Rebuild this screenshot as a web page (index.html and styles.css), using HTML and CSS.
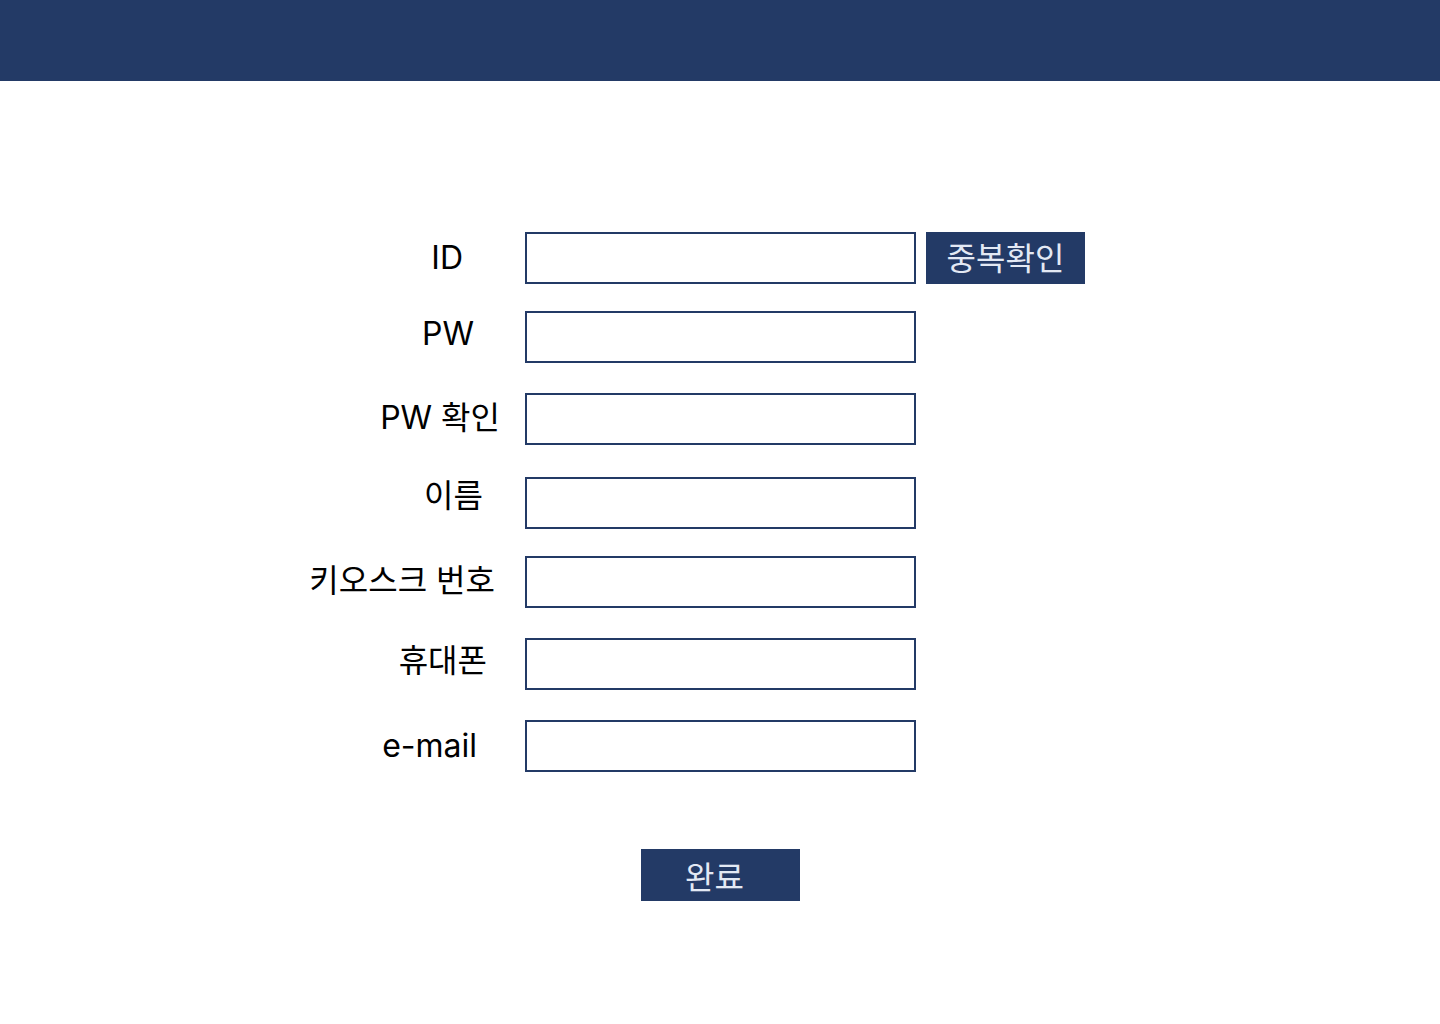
FILE: index.html
```html
<!DOCTYPE html>
<html lang="ko">
<head>
<meta charset="utf-8">
<title>회원가입</title>
<link rel="stylesheet" href="styles.css">
</head>
<body>
<header class="topbar"></header>
<main class="signup">
  <form class="form">
    <div class="row">
      <label class="label label-id">ID</label>
      <input class="field" type="text">
      <button type="button" class="btn btn-check">중복확인</button>
    </div>
    <div class="row row-gap27">
      <label class="label label-pw">PW</label>
      <input class="field" type="password">
    </div>
    <div class="row row-gap30">
      <label class="label label-pwc">PW 확인</label>
      <input class="field" type="password">
    </div>
    <div class="row row-gap32">
      <label class="label label-name">이름</label>
      <input class="field" type="text">
    </div>
    <div class="row row-gap27">
      <label class="label label-kiosk">키오스크 번호</label>
      <input class="field" type="text">
    </div>
    <div class="row row-gap30">
      <label class="label label-phone">휴대폰</label>
      <input class="field" type="text">
    </div>
    <div class="row row-gap30">
      <label class="label label-mail">e-mail</label>
      <input class="field" type="text">
    </div>
    <div class="submit-row">
      <button type="submit" class="btn btn-done">완료</button>
    </div>
  </form>
</main>
</body>
</html>
```
FILE: styles.css
```css
* { box-sizing: border-box; }
html, body { margin: 0; padding: 0; background: #ffffff; }
body {
  font-family: Inter, "Noto Sans CJK KR", sans-serif;
  color: #000000;
  width: 1440px;
  height: 1024px;
  overflow: hidden;
}
.topbar {
  height: 81px;
  background: #233a66;
}
.signup {
  padding-top: 151px;
}
.form {
  display: flex;
  flex-direction: column;
  margin: 0;
}
.row {
  display: flex;
  align-items: center;
  height: 52px;
  margin-top: 27px;
}
.row:first-child { margin-top: 0; }
.row-gap27 { margin-top: 27px; }
.row-gap30 { margin-top: 30px; }
.row-gap32 { margin-top: 32px; }
.label {
  width: 525px;
  text-align: right;
  font-size: 32px;
  line-height: 38px;
  flex: none;
}
.label-id { padding-right: 62px; }
.label-pw { padding-right: 51px; margin-bottom: 6px; }
.label-pwc { padding-right: 25px; margin-bottom: 2px; }
.label-name { padding-right: 42px; margin-bottom: 14px; }
.label-kiosk { padding-right: 30px; margin-bottom: 2px; }
.label-phone { padding-right: 38px; margin-bottom: 6px; }
.label-mail { padding-right: 48px; }
.field {
  width: 391px;
  height: 52px;
  border: 2px solid #233a66;
  background: #ffffff;
  margin: 0;
  padding: 0 10px;
  font: inherit;
  outline: none;
  flex: none;
}
.btn {
  background: #233a66;
  color: #e3e9f4;
  border: none;
  margin: 0;
  font-family: Inter, "Noto Sans CJK KR", sans-serif;
  font-size: 32px;
  line-height: 38px;
  height: 52px;
  width: 159px;
  padding: 0;
  cursor: pointer;
}
.btn-check {
  margin-left: 10px;
  padding-top: 2px;
}
.submit-row {
  display: flex;
  padding-left: 641px;
  margin-top: 77px;
}
.btn-done {
  text-align: left;
  padding-left: 44px;
  padding-top: 5px;
}
```
